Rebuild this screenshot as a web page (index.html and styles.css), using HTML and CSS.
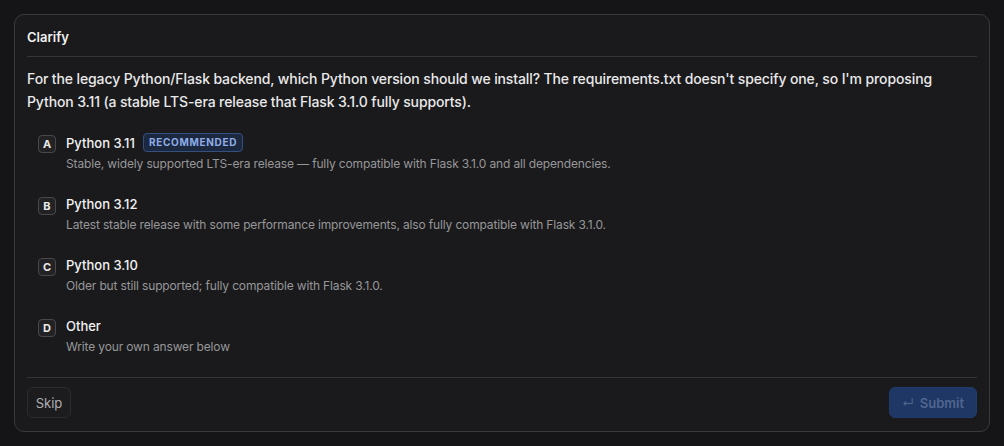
FILE: index.html
```html
<!DOCTYPE html>
<html>
<head>
<meta charset="utf-8">
<link rel="stylesheet" href="styles.css">
</head>
<body>
<div class="card">
  <div class="header">Clarify</div>
  <div class="body">
    <p class="question">For the legacy Python/Flask backend, which Python version should we install? The requirements.txt doesn't specify one, so I'm proposing Python 3.11 (a stable LTS-era release that Flask 3.1.0 fully supports).</p>
    <div class="options">
      <div class="option">
        <span class="key">A</span>
        <div class="opt-text">
          <div class="opt-title">Python 3.11 <span class="badge">RECOMMENDED</span></div>
          <div class="opt-desc">Stable, widely supported LTS-era release — fully compatible with Flask 3.1.0 and all dependencies.</div>
        </div>
      </div>
      <div class="option">
        <span class="key">B</span>
        <div class="opt-text">
          <div class="opt-title">Python 3.12</div>
          <div class="opt-desc">Latest stable release with some performance improvements, also fully compatible with Flask 3.1.0.</div>
        </div>
      </div>
      <div class="option">
        <span class="key">C</span>
        <div class="opt-text">
          <div class="opt-title">Python 3.10</div>
          <div class="opt-desc">Older but still supported; fully compatible with Flask 3.1.0.</div>
        </div>
      </div>
      <div class="option">
        <span class="key">D</span>
        <div class="opt-text">
          <div class="opt-title">Other</div>
          <div class="opt-desc">Write your own answer below</div>
        </div>
      </div>
    </div>
  </div>
  <div class="footer">
    <button class="btn skip">Skip</button>
    <button class="btn submit"><span class="enter">↵</span>Submit</button>
  </div>
</div>
</body>
</html>
```
FILE: styles.css
```css
html, body {
  margin: 0;
  padding: 0;
  background: #151517;
}
body {
  padding: 14px;
  font-family: Inter, "Noto Sans", sans-serif;
  color: #ececec;
}
.card {
  width: 976px;
  height: 418px;
  box-sizing: border-box;
  border: 1px solid #3a3a3c;
  border-radius: 10px;
  background: #1a1a1c;
  padding: 0 12px;
  display: flex;
  flex-direction: column;
}
.header {
  font-size: 13px;
  font-weight: 600;
  line-height: 16px;
  padding: 14px 0 11px;
  border-bottom: 1px solid #363638;
  color: #f0f0f0;
}
.body {
  flex: 1;
  padding-top: 10px;
}
.question {
  margin: 0;
  font-size: 14px;
  line-height: 23px;
  font-weight: 500;
  color: #e9e9ea;
  letter-spacing: -0.12px;
}
.options {
  margin-top: 20px;
  padding-left: 11px;
  display: flex;
  flex-direction: column;
  gap: 22px;
}
.option {
  display: flex;
  gap: 10px;
  align-items: flex-start;
}
.key {
  width: 18px;
  height: 18px;
  box-sizing: border-box;
  margin-top: 2px;
  border: 1px solid #48484b;
  border-radius: 4px;
  background: #222224;
  font-size: 11px;
  font-weight: 700;
  color: #e8e8e8;
  display: flex;
  align-items: center;
  justify-content: center;
}
.opt-text {
  display: flex;
  flex-direction: column;
  gap: 3px;
}
.opt-title {
  font-size: 13px;
  line-height: 18px;
  font-weight: 500;
  color: #f2f2f2;
  display: flex;
  align-items: center;
  gap: 8px;
}
.badge {
  font-size: 10px;
  line-height: 17px;
  font-weight: 700;
  letter-spacing: 0.7px;
  color: #8eaee6;
  background: #1c2740;
  border: 1px solid #34507e;
  border-radius: 4px;
  padding: 0 5px;
}
.opt-desc {
  font-size: 12px;
  line-height: 18px;
  color: #979799;
  letter-spacing: -0.15px;
}
.footer {
  border-top: 1px solid #363638;
  padding: 9px 0 13px;
  display: flex;
  justify-content: space-between;
}
.btn {
  font-family: Inter, "Noto Sans", sans-serif;
  height: 31px;
  border-radius: 6px;
  font-size: 13px;
  cursor: pointer;
}
.skip {
  width: 44px;
  padding: 0;
  background: #1c1c1e;
  border: 1px solid #2c2c2e;
  color: #b0b0b2;
  font-weight: 400;
}
.submit {
  width: 88px;
  padding: 0;
  background: #1e3765;
  border: 1px solid #213c6c;
  color: #50668f;
  font-weight: 600;
  display: flex;
  align-items: center;
  justify-content: center;
  gap: 6px;
}
.enter {
  font-size: 12px;
  font-weight: 400;
}
```
